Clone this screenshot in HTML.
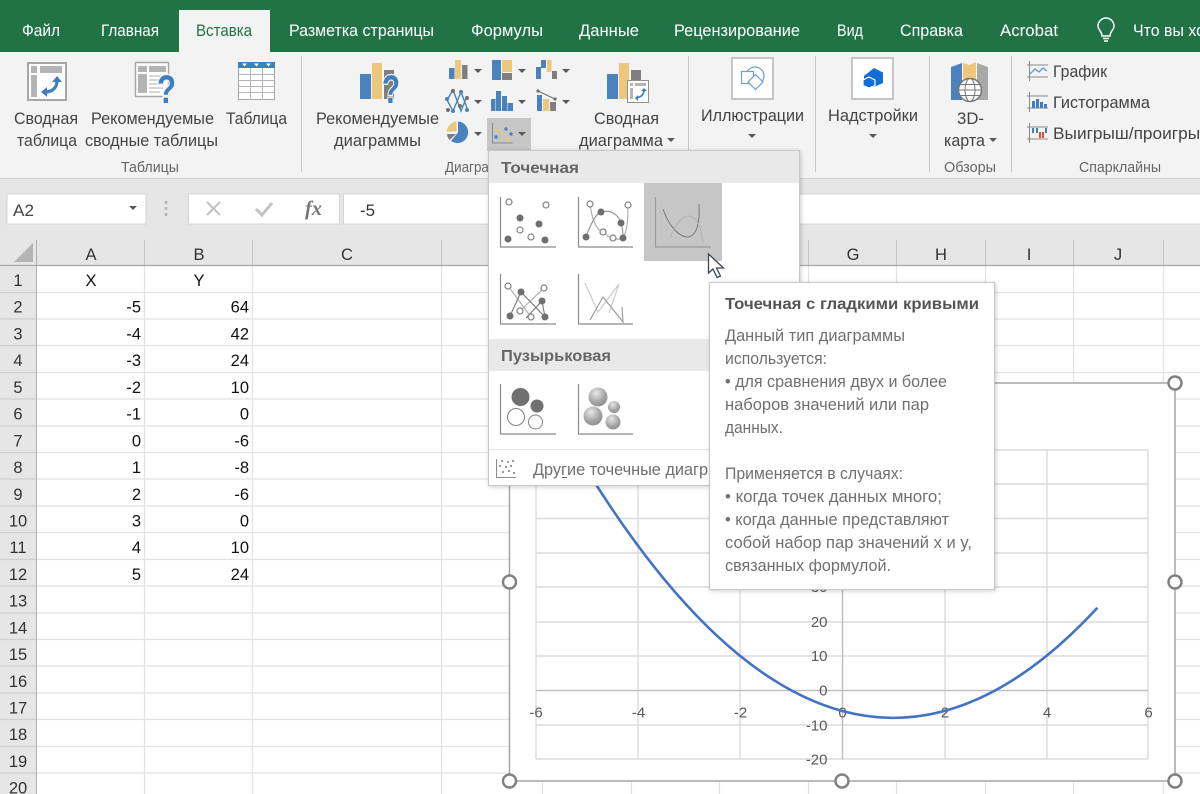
<!DOCTYPE html>
<html lang="ru">
<head>
<meta charset="utf-8">
<title>Excel</title>
<style>
html,body{margin:0;padding:0;width:1200px;height:794px;overflow:hidden;background:#fff}
svg{display:block;position:absolute;left:0;top:0}
text{font-family:"Liberation Sans",sans-serif}
.tab{font-size:16.5px;fill:#fff}
.rb{font-size:17px;fill:#444}
.gp{font-size:15px;fill:#666}
.hd{font-size:16.5px;fill:#333;text-anchor:middle}
.rn{font-size:16.5px;fill:#333;text-anchor:middle}
.c{font-size:16.5px;fill:#111;text-anchor:end}
.cm{font-size:16.5px;fill:#111;text-anchor:middle}
.ax{font-size:15px;fill:#595959}
.tt{font-size:16.5px;fill:#707070}
.b{font-size:16px;font-weight:bold;fill:#666}
</style>
</head>
<body>
<svg width="1200" height="794" viewBox="0 0 1200 794" xmlns="http://www.w3.org/2000/svg">
<defs>
<filter id="sh" x="-5%" y="-5%" width="110%" height="110%"><feDropShadow dx="1" dy="1" stdDeviation="2" flood-color="#000" flood-opacity=".2"/></filter>
<radialGradient id="ball" cx=".4" cy=".3" r=".8"><stop offset="0" stop-color="#e8e8e8"/><stop offset=".6" stop-color="#a4a4a4"/><stop offset="1" stop-color="#8a8a8a"/></radialGradient>
<symbol id="ar" overflow="visible"><path d="M-4 -2H4L0 2Z" fill="#595959"/></symbol>
</defs>

<!-- title / tabs -->
<rect width="1200" height="52" fill="#217346"/>
<rect y="52" width="1200" height="127" fill="#f3f3f3"/>
<rect x="179" y="10" width="91" height="43" fill="#f3f3f3"/>
<text class="tab" x="22" y="36" textLength="38" lengthAdjust="spacingAndGlyphs">Файл</text>
<text class="tab" x="101" y="36" textLength="58" lengthAdjust="spacingAndGlyphs">Главная</text>
<text class="tab" x="196" y="36" textLength="56" lengthAdjust="spacingAndGlyphs" style="fill:#217346">Вставка</text>
<text class="tab" x="289" y="36" textLength="145" lengthAdjust="spacingAndGlyphs">Разметка страницы</text>
<text class="tab" x="471" y="36" textLength="72" lengthAdjust="spacingAndGlyphs">Формулы</text>
<text class="tab" x="579" y="36" textLength="60" lengthAdjust="spacingAndGlyphs">Данные</text>
<text class="tab" x="674" y="36" textLength="126" lengthAdjust="spacingAndGlyphs">Рецензирование</text>
<text class="tab" x="837" y="36" textLength="26" lengthAdjust="spacingAndGlyphs">Вид</text>
<text class="tab" x="900" y="36" textLength="63" lengthAdjust="spacingAndGlyphs">Справка</text>
<text class="tab" x="1000" y="36" textLength="58" lengthAdjust="spacingAndGlyphs">Acrobat</text>
<text class="tab" x="1133" y="36" textLength="72" lengthAdjust="spacingAndGlyphs">Что вы хо</text>
<path d="M1102 36C1102 31 1098 30 1098 26A8 8 0 0 1 1114 26C1114 30 1110 31 1110 36ZM1103 38.500H1109M1104 41H1108" fill="none" stroke="#fff" stroke-width="1.500"/>

<!-- ribbon text -->
<g>
<text class="rb" x="14" y="124" textLength="64" lengthAdjust="spacingAndGlyphs">Сводная</text>
<text class="rb" x="17" y="146" textLength="60" lengthAdjust="spacingAndGlyphs">таблица</text>
<text class="rb" x="91" y="124" textLength="123" lengthAdjust="spacingAndGlyphs">Рекомендуемые</text>
<text class="rb" x="85" y="146" textLength="133" lengthAdjust="spacingAndGlyphs">сводные таблицы</text>
<text class="rb" x="226" y="124" textLength="61" lengthAdjust="spacingAndGlyphs">Таблица</text>
<text class="gp" x="121" y="172" textLength="58" lengthAdjust="spacingAndGlyphs">Таблицы</text>
<text class="rb" x="316" y="124" textLength="123" lengthAdjust="spacingAndGlyphs">Рекомендуемые</text>
<text class="rb" x="334" y="146" textLength="87" lengthAdjust="spacingAndGlyphs">диаграммы</text>
<text class="gp" x="445" y="172" textLength="72" lengthAdjust="spacingAndGlyphs">Диаграммы</text>
<text class="rb" x="594" y="124" textLength="65" lengthAdjust="spacingAndGlyphs">Сводная</text>
<text class="rb" x="579" y="146" textLength="84" lengthAdjust="spacingAndGlyphs">диаграмма</text>
<text class="rb" x="701" y="121" textLength="103" lengthAdjust="spacingAndGlyphs">Иллюстрации</text>
<text class="rb" x="828" y="121" textLength="90" lengthAdjust="spacingAndGlyphs">Надстройки</text>
<text class="rb" x="957" y="124" textLength="27" lengthAdjust="spacingAndGlyphs">3D-</text>
<text class="rb" x="944" y="146" textLength="41" lengthAdjust="spacingAndGlyphs">карта</text>
<text class="gp" x="944" y="172" textLength="52" lengthAdjust="spacingAndGlyphs">Обзоры</text>
<text class="rb" x="1053" y="77" textLength="54" lengthAdjust="spacingAndGlyphs">График</text>
<text class="rb" x="1053" y="108" textLength="97" lengthAdjust="spacingAndGlyphs">Гистограмма</text>
<text class="rb" x="1053" y="139" textLength="161" lengthAdjust="spacingAndGlyphs">Выигрыш/проигрыш</text>
<text class="gp" x="1079" y="172" textLength="82" lengthAdjust="spacingAndGlyphs">Спарклайны</text>
</g>
<path d="M301.500 56V172M688.500 56V172M815.500 56V172M929.500 56V172M1011.500 56V172" stroke="#c6c6c6" stroke-width="1"/>

<!-- arrows -->
<use href="#ar" x="671" y="140"/><use href="#ar" x="752" y="136"/><use href="#ar" x="873" y="136"/><use href="#ar" x="993" y="140"/>
<use href="#ar" x="478" y="71"/><use href="#ar" x="522" y="71"/><use href="#ar" x="566" y="71"/>
<use href="#ar" x="478" y="102"/><use href="#ar" x="522" y="102"/><use href="#ar" x="566" y="102"/>
<use href="#ar" x="478" y="134"/>

<!-- pivot table icon -->
<rect x="28" y="63" width="38" height="37" fill="#fff" stroke="#a6a6a6" stroke-width="2"/>
<path d="M31 66H37V73H31ZM40 66H62V73H40ZM31 75H37V97H31Z" fill="#b4b4b4"/>
<path d="M45 92C52 92 57 88 57 81" fill="none" stroke="#3f7ebf" stroke-width="3.200"/>
<path d="M52 82L57 76L62 82ZM47 87L41 92L47 97Z" fill="#3f7ebf"/>
<!-- recommended pivot -->
<rect x="135.500" y="62.500" width="33" height="34" fill="#fff" stroke="#a6a6a6" stroke-width="1.500"/>
<path d="M138 66H147V72H138ZM149 66H166V72H149ZM138 74H147V93H138Z" fill="#b4b4b4"/>
<path d="M149 76H163M149 80H160M149 84H160M149 88H163M149 92H160" stroke="#c8c8c8" stroke-width="1.500"/>
<text x="157" y="103" font-size="40" font-weight="bold" textLength="19" lengthAdjust="spacingAndGlyphs" style="fill:#3f7ebf;stroke:#f3f3f3;stroke-width:3;paint-order:stroke">?</text>
<!-- table icon -->
<rect x="238.500" y="62.500" width="36" height="37" fill="#fff" stroke="#a6a6a6"/>
<rect x="238" y="62" width="37" height="6" fill="#3f7ebf"/>
<path d="M250.500 68V100M262.500 68V100M239 74.500H274M239 80.500H274M239 86.500H274M239 92.500H274" stroke="#b4b4b4" fill="none"/>
<path d="M242 63.500h5l-2.500 3zM254 63.500h5l-2.500 3zM266 63.500h5l-2.500 3z" fill="#fff"/>
<!-- recommended charts -->
<rect x="360" y="74" width="11" height="25" fill="#4a82bd"/>
<rect x="372" y="63" width="10" height="36" fill="#edc77b"/>
<rect x="384" y="70" width="10" height="29" fill="#7f7f7f"/>
<text x="382" y="103" font-size="40" font-weight="bold" textLength="18" lengthAdjust="spacingAndGlyphs" style="fill:#3f7ebf;stroke:#f3f3f3;stroke-width:2.500;paint-order:stroke">?</text>

<!-- small chart icons row 1 -->
<rect x="449" y="68" width="5.500" height="11" fill="#4a82bd"/><rect x="455" y="60" width="6" height="19" fill="#edc77b"/><rect x="462" y="65" width="5.500" height="14" fill="#7f7f7f"/>
<rect x="492" y="60" width="9" height="20" fill="#4a82bd"/><rect x="502" y="60" width="10" height="12" fill="#edc77b"/><rect x="502" y="73" width="10" height="7" fill="#7f7f7f"/>
<rect x="536" y="67" width="5" height="12" fill="#4a82bd"/><rect x="541" y="60" width="5" height="8" fill="#4a82bd"/><rect x="547" y="60" width="4.500" height="12" fill="#edc77b"/><rect x="552" y="71" width="5" height="8" fill="#7f7f7f"/>
<!-- row 2 -->
<g fill="none" stroke="#4a82bd" stroke-width="1.400"><path d="M447 100L453 111L461 92L467 108M447 100L453 90L461 111L467 96"/></g>
<g fill="#6f6f6f"><circle cx="453" cy="91" r="2"/><circle cx="448" cy="110" r="2"/><circle cx="460" cy="106" r="2"/><circle cx="467" cy="98" r="2"/></g>
<g fill="#4a82bd"><circle cx="461" cy="92" r="2"/><circle cx="453" cy="111" r="2"/><circle cx="467" cy="110" r="2"/><circle cx="447" cy="99" r="2"/></g>
<path d="M491 99h4.500v12h-4.500zM496 91h5v20h-5zM502 96h5v15h-5zM507.500 103h5.500v8h-5.500z" fill="#4a82bd"/>
<rect x="537" y="95" width="5" height="16" fill="#4a82bd"/><rect x="543" y="99" width="6" height="12" fill="#edc77b"/><rect x="550" y="102" width="6" height="9" fill="#7f7f7f"/>
<path d="M538 91L555 99" stroke="#6f6f6f" stroke-width="1.200"/><circle cx="538" cy="91" r="1.600" fill="#6f6f6f"/><circle cx="555" cy="99" r="1.600" fill="#6f6f6f"/>
<!-- pie -->
<path d="M458 121.500A10.800 10.800 0 1 1 451 141L458 132.500Z" fill="#4a82bd"/>
<path d="M456.500 121.500A10.800 10.800 0 0 0 446.800 131.500H456.500Z" fill="#edc77b"/>
<path d="M447 134H456L449.500 140A10 10 0 0 1 447 134Z" fill="#7f7f7f"/>
<!-- scatter button -->
<rect x="487" y="118" width="44" height="33" fill="#c6c6c6"/>
<path d="M492.500 123V143H512.500" fill="none" stroke="#8a8a8a"/>
<g fill="#edc77b"><circle cx="497" cy="130" r="1.700"/><circle cx="502" cy="134" r="1.700"/><circle cx="508" cy="139" r="1.700"/></g>
<g fill="#4a82bd"><circle cx="506" cy="129" r="1.700"/><circle cx="496" cy="137" r="1.700"/><circle cx="511" cy="134" r="1.700"/></g>
<use href="#ar" x="522" y="134"/>

<!-- pivot chart -->
<rect x="607" y="74" width="11" height="25" fill="#4a82bd"/>
<rect x="619" y="63" width="10" height="36" fill="#edc77b"/>
<rect x="631" y="70" width="10" height="12" fill="#7f7f7f"/>
<rect x="627.500" y="80.500" width="21" height="22" fill="#fff" stroke="#8f8f8f"/>
<path d="M630 83h3v3h-3zM635 83h11v3h-11zM630 88h3v11h-3z" fill="#b4b4b4"/>
<path d="M636 98C641 97 644 95 644 90" fill="none" stroke="#3f7ebf" stroke-width="1.800"/>
<path d="M641 91l3 -3 3 3zM638 95l-3 3 3 3z" fill="#3f7ebf"/>

<!-- illustrations -->
<rect x="732" y="58" width="41" height="41" fill="#fff" stroke="#c6c6c6" stroke-width="2"/>
<g fill="none" stroke="#6f9fd4" stroke-width="1.200">
<circle cx="755" cy="76" r="9"/>
<rect x="741.500" y="71.500" width="12" height="12" fill="#fff"/>
<path d="M755.500 74.500L763 82L755.500 89.500L748 82Z" fill="#fff"/>
</g>
<!-- add-ins -->
<rect x="852" y="58" width="41" height="41" fill="#fff" stroke="#c6c6c6" stroke-width="2"/>
<path d="M874 68L883 72.500V83L874 87L868 84.500V78L864 80V76Z" fill="#0f6fd4"/>
<path d="M869 77L875 80V85.500L869 88L863 85.500V80Z" fill="#0f6fd4" stroke="#fff" stroke-width="1.200"/>
<!-- 3d map -->
<path d="M951 67L962 63V100L951 100Z" fill="#4a82bd"/>
<path d="M963 63L969.500 65L976 62V100L969 98L963 100Z" fill="#edc77b"/>
<path d="M977 63L988 67V100L977 100Z" fill="#a9a9a9"/>
<circle cx="970" cy="90" r="11.500" fill="#fff" stroke="#777" stroke-width="1.500"/>
<path d="M959 90H981M960.500 84.500H979.500M960.500 95.500H979.500" stroke="#777"/>
<ellipse cx="970" cy="90" rx="5" ry="11.500" fill="none" stroke="#777"/>
<!-- sparklines -->
<g fill="none" stroke="#8a8a8a"><path d="M1027 65H1048M1027 77H1048M1029.500 61V81"/><path d="M1027 96H1048M1027 108H1048M1029.500 92V112"/><path d="M1027 127H1048M1027 139H1048M1029.500 123V143"/></g>
<path d="M1030 74L1035 69L1039 72L1043 68L1047 71" fill="none" stroke="#5b9bd5" stroke-width="1.300"/>
<path d="M1032 101h3v7h-3zM1036 99h3v9h-3zM1040 102h3v6h-3zM1044 104h3v4h-3z" fill="#3f7ebf"/>
<path d="M1032 128h2v5h-2zM1036 128h2v5h-2zM1045 128h2v5h-2z" fill="#3f7ebf"/>
<path d="M1039 132h2v6h-2zM1042 132h2v6h-2z" fill="#d9522c"/>

<!-- formula bar -->
<rect y="178" width="1200" height="62" fill="#e6e6e6"/>
<rect y="178" width="1200" height="1" fill="#d2d2d2"/>
<rect x="7" y="194" width="139" height="30" fill="#fff" stroke="#d4d4d4"/>
<text x="13" y="216" font-size="17" style="fill:#444" textLength="21" lengthAdjust="spacingAndGlyphs">A2</text>
<use href="#ar" x="133" y="208"/>
<path d="M166 201v3M166 207v3M166 213v3" stroke="#b4b4b4" stroke-width="2.500"/>
<rect x="188.500" y="194" width="151" height="30" fill="#fff" stroke="#d4d4d4"/>
<rect x="343.500" y="194" width="857" height="30" fill="#fff" stroke="#d4d4d4"/>
<path d="M207 202L220 215M220 202L207 215" stroke="#c4c4c4" stroke-width="2.200"/>
<path d="M256 209L262 215L272 203" fill="none" stroke="#c4c4c4" stroke-width="3"/>
<text x="305" y="215" font-size="21" font-style="italic" font-weight="bold" style="font-family:'Liberation Serif',serif;fill:#777" textLength="17" lengthAdjust="spacingAndGlyphs">fx</text>
<text x="360" y="216" font-size="17" style="fill:#333" textLength="15" lengthAdjust="spacingAndGlyphs">-5</text>

<!-- sheet -->
<rect y="240" width="1200" height="26" fill="#e6e6e6"/>
<rect y="266" width="36" height="528" fill="#e6e6e6"/>
<path d="M33 243V262H14Z" fill="#b4b4b4"/>
<path d="M0 292.500H36M0 319H36M0 345.500H36M0 372.500H36M0 399H36M0 426H36M0 452.500H36M0 479H36M0 506H36M0 532.500H36M0 559.500H36M0 586H36M0 613H36M0 639.500H36M0 666H36M0 693H36M0 719.500H36M0 746.500H36M0 773H36" stroke="#cfcfcf" stroke-width="1.300"/>
<path d="M36 292.500H1200M36 319H1200M36 345.500H1200M36 372.500H1200M36 399H1200M36 426H1200M36 452.500H1200M36 479H1200M36 506H1200M36 532.500H1200M36 559.500H1200M36 586H1200M36 613H1200M36 639.500H1200M36 666H1200M36 693H1200M36 719.500H1200M36 746.500H1200M36 773H1200" stroke="#e2e2e2" stroke-width="1.200"/>
<path d="M144.500 266V794M252.500 266V794M441.500 266V794M542.500 266V794M631.500 266V794M719.500 266V794M808.500 266V794M896.500 266V794M985.500 266V794M1073.500 266V794M1163.500 266V794" stroke="#e2e2e2" stroke-width="1.200"/>
<path d="M144.500 240V265M252.500 240V265M441.500 240V265M808.500 240V265M896.500 240V265M985.500 240V265M1073.500 240V265M1163.500 240V265" stroke="#c4c4c4"/>
<path d="M36.500 240V794" stroke="#b0b0b0"/>
<path d="M0 265.500H1200" stroke="#a6a6a6" stroke-width="1.200"/>
<text class="hd" x="91" y="260">A</text><text class="hd" x="199" y="260">B</text><text class="hd" x="347" y="260">C</text>
<text class="hd" x="853" y="260">G</text><text class="hd" x="941" y="260">H</text><text class="hd" x="1029" y="260">I</text><text class="hd" x="1118" y="260">J</text>
<text class="rn" x="18" y="286">1</text><text class="rn" x="18" y="312.700">2</text><text class="rn" x="18" y="339.400">3</text><text class="rn" x="18" y="366.200">4</text><text class="rn" x="18" y="392.900">5</text><text class="rn" x="18" y="419.600">6</text><text class="rn" x="18" y="446.300">7</text><text class="rn" x="18" y="473">8</text><text class="rn" x="18" y="499.800">9</text><text class="rn" x="18" y="526.500">10</text><text class="rn" x="18" y="553.200">11</text><text class="rn" x="18" y="579.900">12</text><text class="rn" x="18" y="606.600">13</text><text class="rn" x="18" y="633.400">14</text><text class="rn" x="18" y="660.100">15</text><text class="rn" x="18" y="686.800">16</text><text class="rn" x="18" y="713.500">17</text><text class="rn" x="18" y="740.200">18</text><text class="rn" x="18" y="767">19</text><text class="rn" x="18" y="793.700">20</text>
<text class="cm" x="91" y="286">X</text><text class="cm" x="199" y="286">Y</text>
<text class="c" x="141" y="312.700">-5</text><text class="c" x="249" y="312.700">64</text>
<text class="c" x="141" y="339.400">-4</text><text class="c" x="249" y="339.400">42</text>
<text class="c" x="141" y="366.200">-3</text><text class="c" x="249" y="366.200">24</text>
<text class="c" x="141" y="392.900">-2</text><text class="c" x="249" y="392.900">10</text>
<text class="c" x="141" y="419.600">-1</text><text class="c" x="249" y="419.600">0</text>
<text class="c" x="141" y="446.300">0</text><text class="c" x="249" y="446.300">-6</text>
<text class="c" x="141" y="473">1</text><text class="c" x="249" y="473">-8</text>
<text class="c" x="141" y="499.800">2</text><text class="c" x="249" y="499.800">-6</text>
<text class="c" x="141" y="526.500">3</text><text class="c" x="249" y="526.500">0</text>
<text class="c" x="141" y="553.200">4</text><text class="c" x="249" y="553.200">10</text>
<text class="c" x="141" y="579.900">5</text><text class="c" x="249" y="579.900">24</text>

<!-- chart -->
<rect x="509.500" y="383" width="665.500" height="398" fill="#fff" stroke="#a6a6a6" stroke-width="1.500"/>
<path d="M536 450H1148M536 484H1148M536 518.500H1148M536 553H1148M536 587H1148M536 622H1148M536 656H1148M536 725H1148M536 759H1148M536 450V759M638 450V759M740 450V759M945 450V759M1047 450V759M1148 450V759" stroke="#dcdcdc" stroke-width="1.400" fill="none"/>
<path d="M536 690.500H1148M842.500 450V759" stroke="#bfbfbf" stroke-width="1.500" fill="none"/>
<g text-anchor="middle"><text class="ax" x="536" y="717.500">-6</text><text class="ax" x="638.500" y="717.500">-4</text><text class="ax" x="740.500" y="717.500">-2</text><text class="ax" x="842.500" y="717.500">0</text><text class="ax" x="945" y="717.500">2</text><text class="ax" x="1047" y="717.500">4</text><text class="ax" x="1148.500" y="717.500">6</text></g>
<g text-anchor="end"><text class="ax" x="827.500" y="592">30</text><text class="ax" x="827.500" y="627">20</text><text class="ax" x="827.500" y="661">10</text><text class="ax" x="827.500" y="695.500">0</text><text class="ax" x="827.500" y="730.500">-10</text><text class="ax" x="827.500" y="764.500">-20</text></g>
<path d="M587 470.200Q842.400 883 1097.400 607.800" fill="none" stroke="#4472c4" stroke-width="2.600"/>
<g fill="#fff" stroke="#808080" stroke-width="2.400">
<circle cx="1175" cy="383" r="6.500"/><circle cx="509.500" cy="582" r="6.500"/><circle cx="1175" cy="582" r="6.500"/><circle cx="509.500" cy="781" r="6.500"/><circle cx="842" cy="781" r="6.500"/><circle cx="1175" cy="781" r="6.500"/>
</g>

<!-- dropdown -->
<rect x="488.500" y="150.500" width="311" height="335" fill="#fff" stroke="#c8c8c8" filter="url(#sh)"/>
<rect x="489" y="151" width="310" height="32" fill="#e9e9e9"/>
<text class="b" x="501" y="173" textLength="78" lengthAdjust="spacingAndGlyphs">Точечная</text>
<rect x="644" y="183" width="78" height="78" fill="#c6c6c6"/>
<g fill="none" stroke="#8a8a8a" stroke-width="1.200">
<path d="M500.500 197V247H556"/><path d="M578.500 197V247H633"/><path d="M655.500 197V247H711" stroke="#999"/>
<path d="M500.500 274V324H556"/><path d="M578.500 274V324H633"/>
<path d="M500.500 384V434H556"/><path d="M578.500 384V434H633"/>
</g>
<!-- thumb 1 -->
<g fill="#fff" stroke="#808080" stroke-width="1.200"><circle cx="509" cy="202" r="3"/><circle cx="546" cy="205" r="3"/><circle cx="520" cy="230" r="3"/><circle cx="531" cy="237" r="3"/></g>
<g fill="#6f6f6f"><circle cx="520" cy="218" r="3.500"/><circle cx="539" cy="224" r="3.500"/><circle cx="508" cy="239" r="3.500"/><circle cx="545" cy="240" r="3.500"/></g>
<!-- thumb 2 -->
<path d="M590 204C592 222 598 231 603 232C606 235 610 238 613 238C618 240 622 240 624 236C628 228 628 215 628 205" fill="none" stroke="#b0b0b0" stroke-width="1.200"/>
<path d="M586 237C590 226 596 213 601 212C612 209 619 216 621 223C623 228 623 233 623 238" fill="none" stroke="#9a9a9a" stroke-width="1.200"/>
<g fill="#fff" stroke="#808080" stroke-width="1.200"><circle cx="590" cy="204" r="3"/><circle cx="628" cy="205" r="3"/><circle cx="603" cy="232" r="3"/><circle cx="613" cy="238" r="3"/></g>
<g fill="#6f6f6f"><circle cx="601" cy="212" r="3.500"/><circle cx="621" cy="223" r="3.500"/><circle cx="586" cy="237" r="3.500"/><circle cx="623" cy="238" r="3.500"/></g>
<!-- thumb 3 selected -->
<path d="M663 209C668 224 678 237 688 237C697 236 700 222 699 204" fill="none" stroke="#7a7a7a" stroke-width="1"/>
<path d="M670 238C675 225 681 217 688 216C698 216 701 230 703 242" fill="none" stroke="#b2b2b2" stroke-width="1"/>
<!-- thumb 4 -->
<path d="M508 286L531 317M544 288L520 311" fill="none" stroke="#aaa" stroke-width="1.100"/>
<path d="M510 316L521 292L545 317L542 301L526 318" fill="none" stroke="#777" stroke-width="1.100"/>
<g fill="#fff" stroke="#808080" stroke-width="1.200"><circle cx="508" cy="286" r="3"/><circle cx="544" cy="288" r="3"/><circle cx="520" cy="311" r="3"/><circle cx="531" cy="317" r="3"/></g>
<g fill="#6f6f6f"><circle cx="521" cy="292" r="3.500"/><circle cx="542" cy="301" r="3.500"/><circle cx="510" cy="316" r="3.500"/><circle cx="545" cy="317" r="3.500"/></g>
<!-- thumb 5 -->
<path d="M585 283L598 312L619 284L609 313" fill="none" stroke="#c8c8c8" stroke-width="1.100"/>
<path d="M590 320L603 297L623 322L622 307" fill="none" stroke="#999" stroke-width="1.100"/>
<!-- bubbles -->
<rect x="489" y="339" width="220" height="32" fill="#e9e9e9"/>
<text class="b" x="501" y="361" textLength="110" lengthAdjust="spacingAndGlyphs">Пузырьковая</text>
<circle cx="520.500" cy="397" r="9" fill="#707070"/><circle cx="537" cy="406" r="6.500" fill="#707070"/>
<circle cx="516" cy="417" r="8.500" fill="#fff" stroke="#808080"/><circle cx="535.500" cy="422" r="7" fill="#fff" stroke="#808080"/>
<circle cx="598" cy="397" r="9.500" fill="url(#ball)"/><circle cx="614" cy="407" r="6" fill="url(#ball)"/><circle cx="593" cy="416" r="9.500" fill="url(#ball)"/><circle cx="613" cy="422" r="7.500" fill="url(#ball)"/>
<path d="M489 449.500H709" stroke="#e4e4e4"/>
<path d="M496.500 459V477.500H516" fill="none" stroke="#8a8a8a"/>
<g fill="#777"><circle cx="502" cy="461" r="1"/><circle cx="508" cy="462" r="1"/><circle cx="513" cy="461" r="1"/><circle cx="500" cy="466" r="1"/><circle cx="506" cy="467" r="1"/><circle cx="511" cy="466" r="1"/><circle cx="503" cy="472" r="1"/><circle cx="509" cy="471" r="1"/><circle cx="514" cy="473" r="1"/></g>
<text x="533" y="475" font-size="16.5" style="fill:#707070" textLength="175" lengthAdjust="spacingAndGlyphs">Другие точечные диагр</text>
<path d="M562 477.500H567" stroke="#666"/>

<!-- tooltip -->
<rect x="709.500" y="282.500" width="285" height="307" fill="#fff" stroke="#c8c8c8" filter="url(#sh)"/>
<text class="b" x="725" y="309" textLength="254" lengthAdjust="spacingAndGlyphs" style="fill:#555">Точечная с гладкими кривыми</text>
<text class="tt" x="725" y="341" textLength="180" lengthAdjust="spacingAndGlyphs">Данный тип диаграммы</text>
<text class="tt" x="725" y="364" textLength="102" lengthAdjust="spacingAndGlyphs">используется:</text>
<text class="tt" x="725" y="387" textLength="222" lengthAdjust="spacingAndGlyphs">• для сравнения двух и более</text>
<text class="tt" x="725" y="410" textLength="204" lengthAdjust="spacingAndGlyphs">наборов значений или пар</text>
<text class="tt" x="725" y="433" textLength="58" lengthAdjust="spacingAndGlyphs">данных.</text>
<text class="tt" x="725" y="479" textLength="178" lengthAdjust="spacingAndGlyphs">Применяется в случаях:</text>
<text class="tt" x="725" y="502" textLength="217" lengthAdjust="spacingAndGlyphs">• когда точек данных много;</text>
<text class="tt" x="725" y="525" textLength="224" lengthAdjust="spacingAndGlyphs">• когда данные представляют</text>
<text class="tt" x="725" y="548" textLength="247" lengthAdjust="spacingAndGlyphs">собой набор пар значений x и y,</text>
<text class="tt" x="725" y="571" textLength="166" lengthAdjust="spacingAndGlyphs">связанных формулой.</text>

<!-- cursor -->
<path d="M708.500 254V273L713 269L717 277.500L720.500 276L716.500 268L723.500 268Z" fill="#fff" stroke="#3c4650" stroke-width="1.300"/>
</svg>
</body>
</html>
